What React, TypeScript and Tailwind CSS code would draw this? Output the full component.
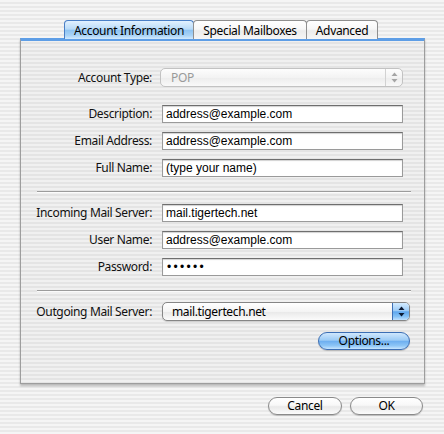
import React from "react";

const LABEL = "w-[131px] shrink-0 text-right leading-[18px]";
const BOX =
  "h-[18px] w-[241px] bg-white border border-[#9a9a9a] border-t-[#6e6e6e] shadow-[inset_0_1px_1px_rgba(0,0,0,0.18)] leading-[16px] font-['Liberation_Sans',Arial,sans-serif] text-black whitespace-nowrap overflow-hidden";
const FIELD = BOX + " pl-[3px] text-[12px] tracking-normal";

function Arrows({ color }: { color: string }) {
  return (
    <svg width="7" height="11" viewBox="0 0 7 11">
      <path d="M3.5 0.5 L6.5 4 L0.5 4 Z" fill={color} />
      <path d="M3.5 10.5 L6.5 7 L0.5 7 Z" fill={color} />
    </svg>
  );
}

function Row({ label, children }: { label: string; children: React.ReactNode }) {
  return (
    <div className="flex items-center h-[18px]">
      <div className={LABEL}>{label}</div>
      <div className="ml-[10px]">{children}</div>
    </div>
  );
}

function Tab({ label, w, active }: { label: string; w: string; active?: boolean }) {
  return (
    <div
      className={
        (active
          ? "border-[#4a7fc6] bg-[linear-gradient(to_bottom,#e2f1ff_0%,#b9dbf8_45%,#8fc4f2_52%,#a9d3f7_80%,#d2eafd_100%)] "
          : "border-[#8f8f8f] bg-[linear-gradient(to_bottom,#ffffff_0%,#f7f7f7_45%,#ebebeb_55%,#f6f6f6_100%)] ") +
        w +
        " h-[19px] -mr-[1px] rounded-t-[4px] border border-b-0 flex items-center justify-center pt-[1px] text-[12px] leading-none text-black"
      }
    >
      {label}
    </div>
  );
}

function Pill({ label, w, blue }: { label: string; w: string; blue?: boolean }) {
  return (
    <div
      className={
        (blue
          ? "border-[#3b6eb4] bg-[linear-gradient(to_bottom,#cfe7fd_0%,#9ccbf5_45%,#6eaff0_52%,#8ec6f6_80%,#c9e6ff_100%)] "
          : "border-[#8a8a8a] bg-[linear-gradient(to_bottom,#ffffff_0%,#f8f8f8_45%,#e9e9e9_55%,#fbfbfb_100%)] ") +
        w +
        " h-[18px] rounded-full border flex items-center justify-center text-[12px] leading-none text-black shadow-[0_1px_1px_rgba(0,0,0,0.2)]"
      }
    >
      {label}
    </div>
  );
}

function Separator({ mt }: { mt: string }) {
  return (
    <div className={mt + " ml-[16px] mr-[13px]"}>
      <div className="h-px bg-[#9c9c9c]" />
      <div className="h-px bg-white/80" />
    </div>
  );
}

export default function App() {
  return (
    <div className="w-[444px] h-[434px] overflow-hidden bg-[repeating-linear-gradient(to_bottom,#f5f5f5_0px,#f5f5f5_2px,#e9e9e9_2px,#e9e9e9_4px)] pt-[20px] font-['Noto_Sans','Open_Sans',sans-serif] text-[12px] tracking-[-0.35px] text-[#111]">
      <div className="ml-[20px] w-[405px]">
        {/* tab strip */}
        <div className="relative z-10 flex pl-[44px] h-[18px] overflow-visible">
          <Tab label="Account Information" w="w-[130px]" active />
          <Tab label="Special Mailboxes" w="w-[114px]" />
          <Tab label="Advanced" w="w-[72px]" />
        </div>

        {/* group box */}
        <div className="h-[346px] border-x border-b border-[#9d9d9d] border-t-[3px] border-t-[#5e9ee6] bg-black/[0.02] shadow-[0_2px_2px_rgba(0,0,0,0.25)]">
          <div className="pt-[27px]">
            {/* account type (disabled popup) */}
            <div className="flex items-center h-[19px]">
              <div className={LABEL}>Account Type:</div>
              <div className="ml-[8px] flex h-[19px] w-[243px] rounded-[5px] border border-[#c2c2c2] bg-[linear-gradient(to_bottom,#fdfdfd,#f3f3f3_50%,#ececec_51%,#f9f9f9)]">
                <span className="flex-1 pl-[10px] leading-[17px] text-[#9a9a9a]">POP</span>
                <span className="w-[17px] flex items-center justify-center border-l border-[#d2d2d2]">
                  <Arrows color="#a5a5a5" />
                </span>
              </div>
            </div>

            <div className="mt-[18px] flex flex-col gap-[9px]">
              <Row label="Description:">
                <div className={FIELD + " shadow-[0_0_0_3px_#8db4e3]"}>address@example.com</div>
              </Row>
              <Row label="Email Address:">
                <div className={FIELD}>address@example.com</div>
              </Row>
              <Row label="Full Name:">
                <div className={FIELD}>(type your name)</div>
              </Row>
            </div>

            <Separator mt="mt-[14px]" />

            <div className="mt-[11px] flex flex-col gap-[9px]">
              <Row label="Incoming Mail Server:">
                <div className={FIELD}>mail.tigertech.net</div>
              </Row>
              <Row label="User Name:">
                <div className={FIELD}>address@example.com</div>
              </Row>
              <Row label="Password:">
                <div className={BOX + " pl-[4px] text-[12px] tracking-[2.3px]"}>••••••</div>
              </Row>
            </div>

            <Separator mt="mt-[14px]" />

            {/* outgoing server popup */}
            <div className="mt-[10px] flex items-center h-[19px]">
              <div className={LABEL}>Outgoing Mail Server:</div>
              <div className="ml-[10px] flex h-[19px] w-[248px] rounded-[5px] border border-[#858585] bg-[linear-gradient(to_bottom,#ffffff,#f4f4f4_50%,#e8e8e8_51%,#fbfbfb)] shadow-[0_1px_1px_rgba(0,0,0,0.15)] overflow-hidden">
                <span className="flex-1 pl-[9px] leading-[17px] text-black">mail.tigertech.net</span>
                <span className="w-[17px] flex items-center justify-center border-l border-[#3d6fb5] bg-[linear-gradient(to_bottom,#d3ebff_0%,#9dcbf6_45%,#5ea7ee_52%,#86c2f6_80%,#c2e2ff_100%)]">
                  <Arrows color="#0b1a33" />
                </span>
              </div>
            </div>

            <div className="mt-[11px] flex justify-end pr-[14px]">
              <Pill label="Options..." w="w-[92px]" blue />
            </div>
          </div>
        </div>
      </div>

      {/* dialog buttons */}
      <div className="mt-[13px] flex justify-end gap-[8px] pr-[21px]">
        <Pill label="Cancel" w="w-[74px]" />
        <Pill label="OK" w="w-[73px]" />
      </div>
    </div>
  );
}
